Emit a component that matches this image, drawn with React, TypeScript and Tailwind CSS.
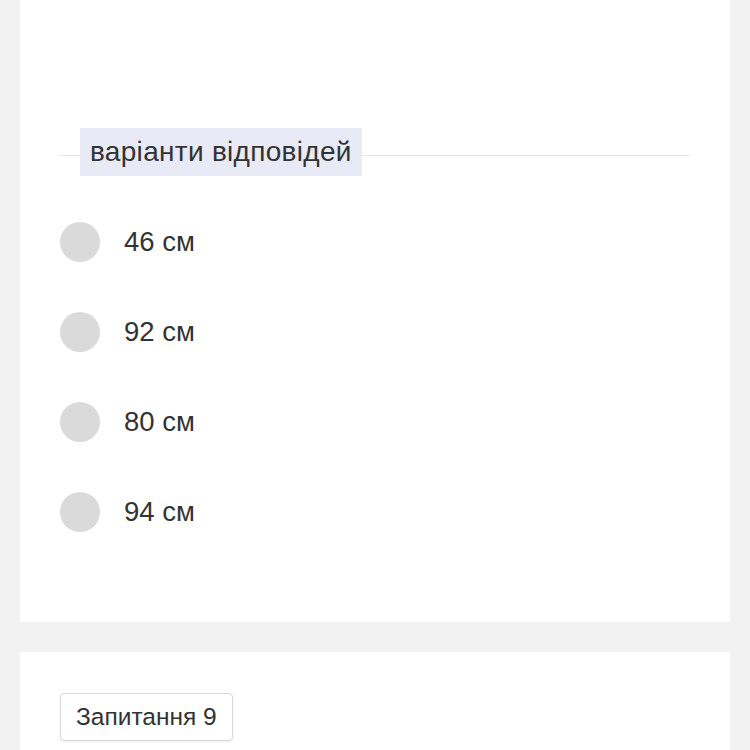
export default function App() {
  const opts = ["46 см", "92 см", "80 см", "94 см"];
  return (
    <div className="min-h-[750px] h-[750px] overflow-hidden bg-[#f2f2f2] px-5" style={{ fontFamily: '"Liberation Sans", Arial, sans-serif' }}>
      <div className="bg-white h-[622px] px-10 pt-[128px]">
        <div className="relative h-12 flex items-center">
          <div className="absolute left-0 right-0 top-[27px] h-px bg-[#e6e6e6]"></div>
          <div className="relative ml-5 h-12 px-[10px] bg-[#e8eaf6] flex items-center text-[28px] tracking-[0.3px] text-[#333]">варіанти відповідей</div>
        </div>
        <div className="flex flex-col gap-[50px] mt-[46px]">
          {opts.map((o) => (
            <div key={o} className="flex items-center h-10">
              <div className="w-10 h-10 rounded-full bg-[#dadada]"></div>
              <div className="ml-6 text-[27.5px] text-[#333]">{o}</div>
            </div>
          ))}
        </div>
      </div>
      <div className="bg-white mt-[30px] h-[200px] px-10 pt-[41px]">
        <div className="inline-flex items-center h-12 px-[15px] border border-[#d8d8d8] rounded-[4px] shadow-[0_1px_2px_rgba(0,0,0,0.08)] text-[24.5px] text-[#333]">Запитання 9</div>
      </div>
    </div>
  );
}
